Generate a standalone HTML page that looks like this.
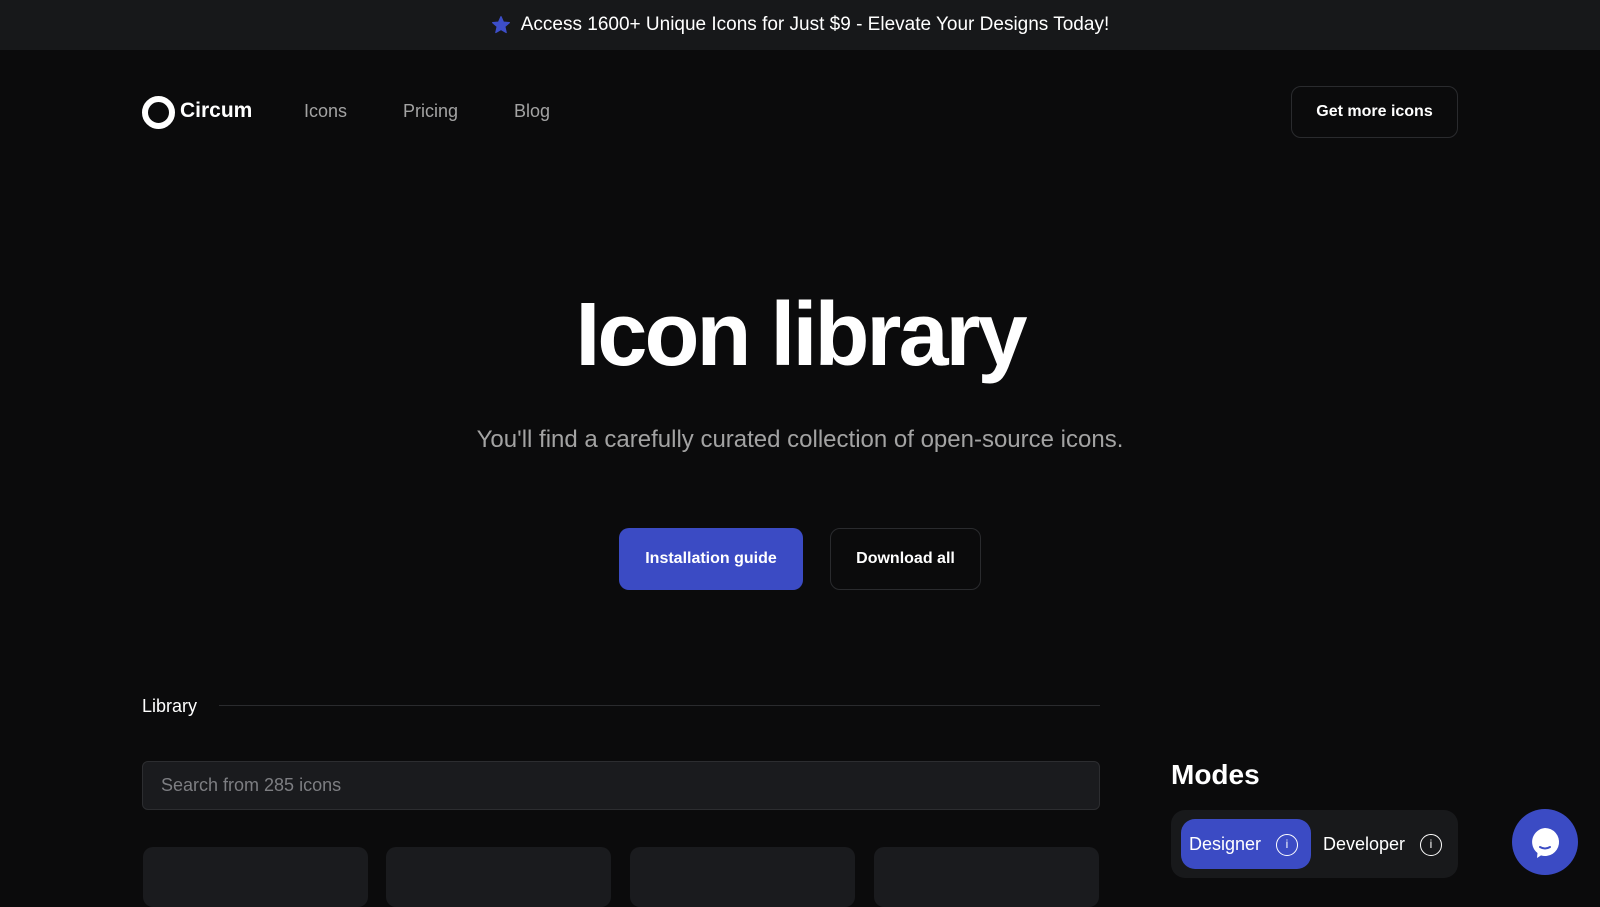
<!DOCTYPE html>
<html><head><meta charset="utf-8"><style>
*{margin:0;padding:0;box-sizing:border-box}
body{width:1600px;height:889px;overflow:hidden;background:#0b0b0c;font-family:"Liberation Sans",sans-serif;color:#fff;position:relative}
.top{position:absolute;left:0;top:0;width:1600px;height:50px;background:#17181a;display:flex;align-items:center;justify-content:center;font-size:19px;gap:10px}
.abs{position:absolute}
.nav{font-size:18px;color:#a3a3a3;top:101px}
.btn{position:absolute;border-radius:10px;display:flex;align-items:center;justify-content:center;font-size:16px;font-weight:bold}
.card{position:absolute;top:847px;height:60px;width:225px;background:#1a1b1e;border-radius:10px}
</style></head><body>
<div class="top"><svg width="20" height="20" viewBox="0 0 24 24"><path d="M12 2l2.9 6.6 7.1.6-5.4 4.7 1.6 7.1L12 17.3 5.8 21l1.6-7.1L2 9.2l7.1-.6z" fill="#3d4ec9" stroke="#3d4ec9" stroke-linejoin="round" stroke-width="1.5"/></svg><span>Access 1600+ Unique Icons for Just $9 - Elevate Your Designs Today!</span></div>
<div class="abs" style="left:142px;top:96px;width:33px;height:33px;border-radius:50%;border:6px solid #fff"></div>
<div class="abs" style="left:180px;top:99px;font-size:21px;font-weight:bold">Circum</div>
<div class="abs nav" style="left:304px">Icons</div>
<div class="abs nav" style="left:403px">Pricing</div>
<div class="abs nav" style="left:514px">Blog</div>
<div class="btn" style="left:1291px;top:86px;width:167px;height:52px;border:1px solid #2a2b2e">Get more icons</div>
<div class="abs" style="left:0;width:1600px;top:284px;text-align:center;font-size:90px;font-weight:bold;letter-spacing:-3px">Icon library</div>
<div class="abs" style="left:0;width:1600px;top:426px;text-align:center;font-size:24px;color:#a3a3a3">You'll find a carefully curated collection of open-source icons.</div>
<div class="btn" style="left:619px;top:528px;width:184px;height:62px;background:#3b4bc4">Installation guide</div>
<div class="btn" style="left:830px;top:528px;width:151px;height:62px;border:1px solid #2a2b2e">Download all</div>
<div class="abs" style="left:142px;top:696px;font-size:18px">Library</div>
<div class="abs" style="left:219px;top:705px;width:881px;height:1px;background:#2a2b2e"></div>
<div class="abs" style="left:142px;top:761px;width:958px;height:49px;background:#1a1b1e;border:1px solid #2c2d30;border-radius:6px;font-size:18px;color:#7d7e82;padding:13px 18px">Search from 285 icons</div>
<div class="card" style="left:143px"></div>
<div class="card" style="left:386px"></div>
<div class="card" style="left:630px"></div>
<div class="card" style="left:874px"></div>
<div class="abs" style="left:1171px;top:759px;font-size:28px;font-weight:bold">Modes</div>
<div class="abs" style="left:1171px;top:810px;width:287px;height:68px;background:#18191b;border-radius:14px"></div>
<div class="abs" style="left:1181px;top:819px;width:130px;height:50px;background:#3b4bc4;border-radius:14px"></div>
<div class="abs" style="left:1189px;top:834px;font-size:18px">Designer</div>
<div class="abs" style="left:1276px;top:834px;width:22px;height:22px;border:1.5px solid #fff;border-radius:50%;font-size:12px;text-align:center;line-height:19px">i</div>
<div class="abs" style="left:1323px;top:834px;font-size:18px">Developer</div>
<div class="abs" style="left:1420px;top:834px;width:22px;height:22px;border:1.5px solid #fff;border-radius:50%;font-size:12px;text-align:center;line-height:19px">i</div>
<div class="abs" style="left:1512px;top:809px;width:66px;height:66px;border-radius:50%;background:#3b4bc4"></div>
<svg class="abs" style="left:1525px;top:822px" width="40" height="40" viewBox="0 0 40 40"><path d="M20 6a14 14 0 1 1-4 27.4L12 36l.5-5A14 14 0 0 1 20 6z" fill="#fff"/><path d="M15 25q5 3 10 0" stroke="#3b4bc4" stroke-width="2" fill="none" stroke-linecap="round"/></svg>
</body></html>
